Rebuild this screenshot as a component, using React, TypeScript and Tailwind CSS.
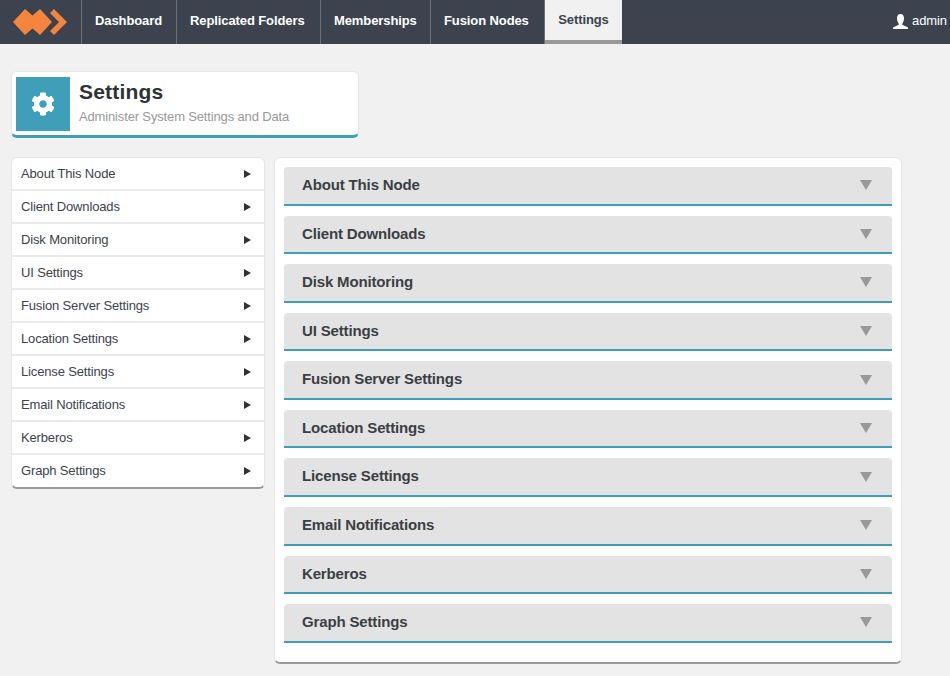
import { FC } from 'react';
import { FaCog } from 'react-icons/fa';

const NAV_ITEMS = [
  { label: 'Dashboard', width: 'w-[95px]' },
  { label: 'Replicated Folders', width: 'w-[144px]' },
  { label: 'Memberships', width: 'w-[110px]' },
  { label: 'Fusion Nodes', width: 'w-[114px]' },
];

const SECTIONS = [
  'About This Node',
  'Client Downloads',
  'Disk Monitoring',
  'UI Settings',
  'Fusion Server Settings',
  'Location Settings',
  'License Settings',
  'Email Notifications',
  'Kerberos',
  'Graph Settings',
];

const Logo: FC = () => (
  <svg width="54" height="26" viewBox="0 0 54 26" className="block" fill="#f5843c">
    <path d="M12 0l7.500 6.500L27 0l12 13-12 13-7.500-6.500L12 26 0 13z" />
    <path d="M41 0l13 13-13 13-4-4 9-9-9-9z" />
  </svg>
);

const UserIcon: FC = () => (
  <svg width="15" height="15" viewBox="0 0 15 15" fill="#fff">
    <path d="M7.500 0C10 0 11 2 11 4.500S9.800 9 9.300 9.500V10.800L15 13.500V15H0V13.500L5.700 10.800V9.500C5.200 9 4 7 4 4.500S5 0 7.500 0z" />
  </svg>
);

const App: FC = () => {
  return (
    <div className="w-[950px] h-[676px] overflow-hidden bg-[#f1f1f1] font-['Liberation_Sans',Arial,sans-serif]">
      <nav className="flex h-11 bg-[#3c434e]">
        <div className="flex w-[82px] items-center pl-[13px] border-r border-[#6b7078]">
          <Logo />
        </div>
        {NAV_ITEMS.map((item) => (
          <a
            key={item.label}
            className={`flex items-center ${item.width} pl-[13px] pb-0.5 border-r border-[#6b7078] text-[13px] tracking-[-0.1px] font-bold text-white`}
          >
            {item.label}
          </a>
        ))}
        <a className="flex items-center w-[77px] justify-center h-11 bg-[#f1f1f1] border-b-4 border-[#999] text-[13px] tracking-[-0.1px] font-bold text-[#3c434e]">
          Settings
        </a>
        <div className="ml-auto flex items-center gap-1 pb-0.5 pr-[3px] text-[13px] tracking-[-0.1px] text-white">
          <UserIcon />
          admin
        </div>
      </nav>

      <div className="px-[11px] pt-[27px]">
        <div className="flex w-[348px] h-[67px] rounded-md bg-white border-t border-x border-[#e6e6e6] border-b-[3px] border-b-[#3f9fb8] pl-1 pt-[5px]">
          <div className="flex items-center justify-center w-[54px] h-[54px] bg-[#3f9fb8]">
            <FaCog className="text-white w-6 h-6" />
          </div>
          <div className="ml-[9px]">
            <h1 className="text-[21px] leading-[30px] font-bold tracking-[0.2px] text-[#2e3338]">Settings</h1>
            <p className="text-[13px] leading-[20px] tracking-[-0.15px] text-[#999]">
              Administer System Settings and Data
            </p>
          </div>
        </div>

        <div className="flex items-start gap-[9px] mt-[19px]">
          <ul className="w-[254px] rounded-md bg-white border-x border-t border-[#e6e6e6] border-b-2 border-b-[#999]">
            {SECTIONS.map((section) => (
              <li
                key={section}
                className="flex items-center justify-between h-[33px] pl-[9px] pr-[13px] border-b-2 border-[#eaeaea] last:border-b-0 last:h-[32px] text-[13px] tracking-[-0.15px] text-[#3c434e]"
              >
                {section}
                <span className="w-0 h-0 border-y-[4px] border-y-transparent border-l-[7px] border-l-[#333]" />
              </li>
            ))}
          </ul>

          <div className="flex flex-col gap-[10px] w-[628px] h-[507px] rounded-md bg-white border-x border-t border-[#e6e6e6] border-b-2 border-b-[#999] px-[9px] pt-[9px]">
            {SECTIONS.map((section) => (
              <div
                key={section}
                className="flex items-center justify-between shrink-0 h-[38.57px] pl-[18px] pr-5 rounded-t-sm bg-[#e3e3e3] border-b-2 border-[#3f9fb8] text-[15px] tracking-[-0.15px] font-bold text-[#3a3f45]"
              >
                {section}
                <span className="w-0 h-0 border-x-[6px] border-x-transparent border-t-[10px] border-t-[#999]" />
              </div>
            ))}
          </div>
        </div>
      </div>
    </div>
  );
};

export default App;
